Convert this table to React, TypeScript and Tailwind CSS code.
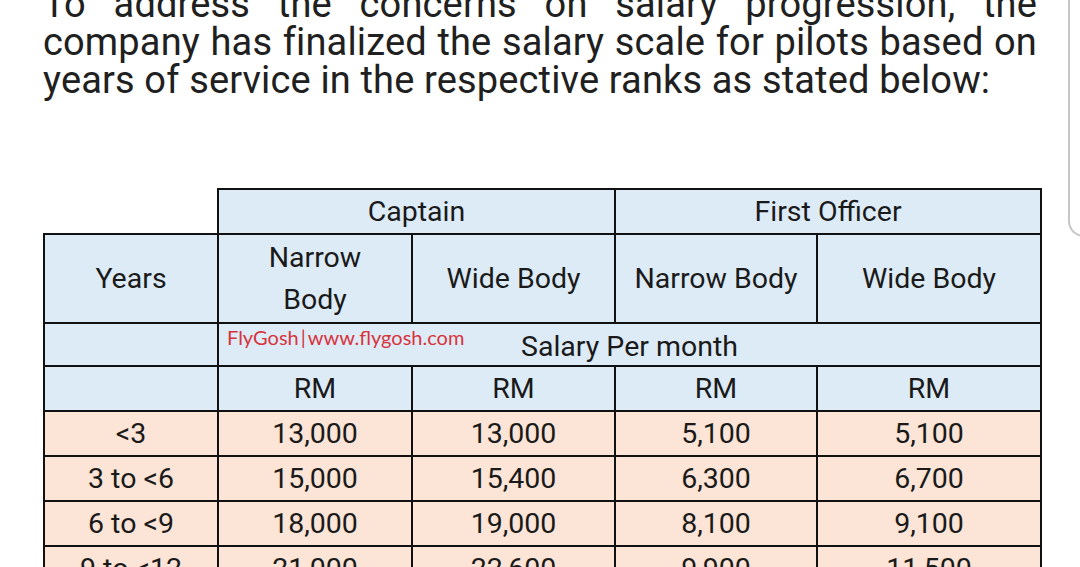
import React from 'react';

const rows = [
  { years: '<3', cnb: '13,000', cwb: '13,000', fnb: '5,100', fwb: '5,100' },
  { years: '3 to <6', cnb: '15,000', cwb: '15,400', fnb: '6,300', fwb: '6,700' },
  { years: '6 to <9', cnb: '18,000', cwb: '19,000', fnb: '8,100', fwb: '9,100' },
  { years: '9 to <12', cnb: '21,000', cwb: '22,600', fnb: '9,900', fwb: '11,500' },
];

const cell = 'border-2 border-[#111] text-center align-middle p-0';
const fullLine = 'block text-justify [text-align-last:justify]';

export default function App() {
  return (
    <div className="relative w-[1080px] h-[567px] overflow-hidden bg-white text-[#202020] font-['Roboto',sans-serif]">
      {/* intro paragraph, first line cut by the scroll */}
      <p className="mt-[-15px] ml-[43px] w-[994px] text-[38px] leading-[38px] tracking-[0.15px] whitespace-nowrap">
        <span className={fullLine}>To address the concerns on salary progression, the</span>
        <span className={fullLine}>company has finalized the salary scale for pilots based on</span>
        <span className="block">years of service in the respective ranks as stated below:</span>
      </p>

      {/* salary table */}
      <table className="mt-[89px] ml-[43px] w-[997px] table-fixed border-collapse text-[28.5px] leading-[36px] text-[#1a1a1a]">
        <colgroup>
          <col className="w-[174px]" />
          <col className="w-[194px]" />
          <col className="w-[203px]" />
          <col className="w-[202px]" />
          <col className="w-[224px]" />
        </colgroup>
        <tbody>
          <tr className="h-[45px]">
            <td className="p-0"></td>
            <td colSpan={2} className={`${cell} bg-[#ddebf7]`}>Captain</td>
            <td colSpan={2} className={`${cell} bg-[#ddebf7]`}>First Officer</td>
          </tr>
          <tr className="h-[89px] bg-[#ddebf7]">
            <td className={cell}>Years</td>
            <td className={`${cell} leading-[42px]`}>Narrow<br />Body</td>
            <td className={cell}>Wide Body</td>
            <td className={cell}>Narrow Body</td>
            <td className={cell}>Wide Body</td>
          </tr>
          <tr className="h-[43px] bg-[#ddebf7]">
            <td className={cell}></td>
            <td colSpan={4} className={`${cell} relative pt-[4px]`}>
              <span className="absolute left-[8px] top-[-2px] text-[20px] leading-[30px] text-[#d8333c] font-['Lato',sans-serif]">
                FlyGosh<span className="mx-[2px]">|</span>www.flygosh.com
              </span>
              Salary Per month
            </td>
          </tr>
          <tr className="h-[45px] bg-[#ddebf7]">
            <td className={cell}></td>
            <td className={cell}>RM</td>
            <td className={cell}>RM</td>
            <td className={cell}>RM</td>
            <td className={cell}>RM</td>
          </tr>
          {rows.map(r => (
            <tr key={r.years} className="h-[45px] bg-[#fce4d6]">
              <td className={cell}>{r.years}</td>
              <td className={cell}>{r.cnb}</td>
              <td className={cell}>{r.cwb}</td>
              <td className={cell}>{r.fnb}</td>
              <td className={cell}>{r.fwb}</td>
            </tr>
          ))}
        </tbody>
      </table>

      {/* edge of a floating panel at the right */}
      <div className="absolute left-[1068px] top-0 w-[30px] h-[237px] border-l-2 border-b-2 border-[#c6c6c6] rounded-bl-[16px]"></div>
    </div>
  );
}
